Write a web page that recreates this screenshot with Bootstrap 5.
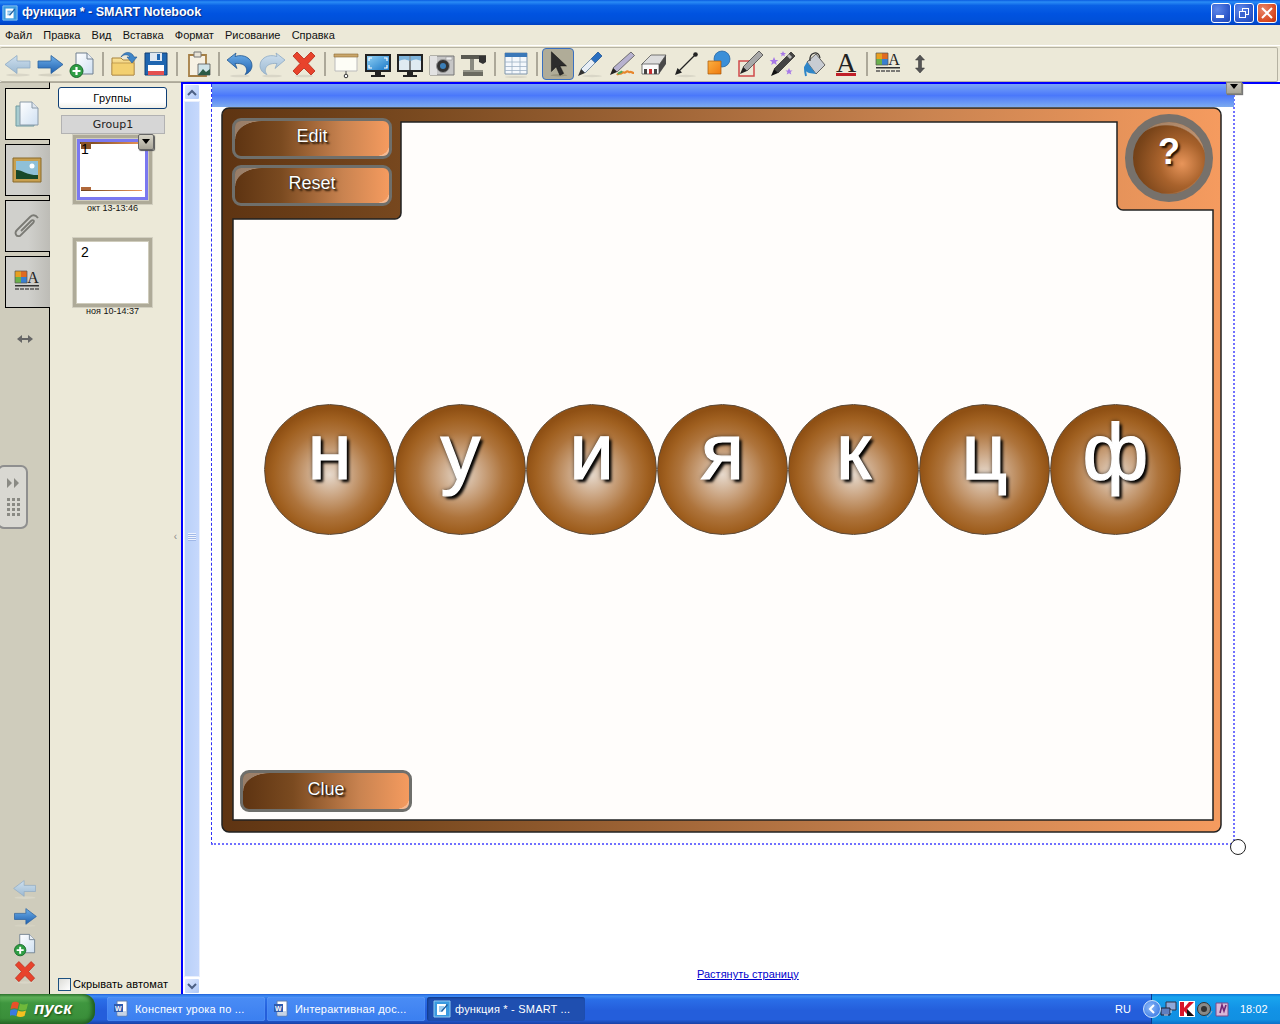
<!DOCTYPE html>
<html lang="ru">

<head>
    <meta charset="UTF-8">
    <title>функция * - SMART Notebook</title>
    <link href="https://cdn.jsdelivr.net/npm/bootstrap@5.3.3/dist/css/bootstrap.min.css" rel="stylesheet">
    <style>
        html, body { margin: 0; height: 100%; }
        body {
            width: 1280px; height: 1024px; overflow: hidden;
            background: #ece9d8; color: #000;
            font-family: "Liberation Sans", Arial, sans-serif; font-size: 11px;
        }
        .defs-holder { position: absolute; width: 0; height: 0; }

        /* title bar */
        .win-title {
            height: 25px; padding: 0 3px 0 2px; color: #fff;
            background: linear-gradient(#0a5be0 0, #2a8cf5 8%, #0a62e6 22%, #0053e0 55%, #0050d8 85%, #003fc0 100%);
        }
        .win-title-text { font-size: 12.5px; font-weight: 700; margin-left: 4px; text-shadow: 1px 1px 1px #0a2a80; }
        .win-ctl {
            width: 20px; height: 20px; margin-left: 3px; border: 1px solid #fff; border-radius: 3px;
            background: radial-gradient(circle at 30% 30%, #5f88ea, #2a55c8 70%, #2048b0);
        }
        .win-ctl-close { background: radial-gradient(circle at 30% 30%, #e8866a, #d8481f 70%, #b83010); }

        /* menu and toolbar */
        .win-menu { height: 20px; padding-left: 5px; font-size: 11px; color: #111; }
        .win-menu span { margin-right: 11.2px; }
        .tool-wrap { height: 37px; padding: 1px 2px 1px 0; border-top: 1px solid #fff; border-bottom: 1px solid #fff; }
        .tool-row {
            height: 35px; padding: 0 0 2px 2px; width: 100%;
            border: 1px solid #b5b2a2; border-left: 0; border-radius: 2px; background: #ece9d8;
        }
        .tool-btn { width: 32px; height: 32px; flex: none; display: block; }
        .tool-on { background: #b0ac98; border: 1px solid #3a70c0; border-radius: 4px; }
        .tool-sep { width: 10px; flex: none; display: flex; justify-content: center; }
        .tool-sep i { width: 2px; height: 24px; background: #aca899; display: block; }

        /* left side */
        .work-area { height: 912px; }
        .tab-strip { width: 50px; flex: none; background: #cfccbc; border-right: 1px solid #000; border-top: 1px solid #aca899; padding-top: 5px; position: relative; }
        .side-tab {
            width: 45px; height: 52px; margin: 0 0 4px 5px; padding-right: 2px; flex: none;
            border: 1px solid #000; border-right: 0;
            background: linear-gradient(90deg, #d0d0cc 50%, #bdbcb6 100%);
        }
        .side-tab-on { width: 45px; margin-right: -1px; background: #ece9d8; position: relative; z-index: 1; }
        .strip-swap { margin-top: 22px; }
        .strip-grip {
            position: absolute; left: -3px; top: 382px; width: 31px; height: 64px;
            background: #d9d8d2; border: 2px solid #8f8f8f; border-radius: 7px;
        }
        .side-panel { width: 131px; flex: none; border-top: 1px solid #aca899; position: relative; }
        .group-btn {
            width: 109px; height: 22px; margin: 4px 0 0 8px; padding: 0; font-size: 11px;
            letter-spacing: .3px; line-height: 19px; color: #000;
            background: linear-gradient(#fff, #fff 70%, #f0efe8); border: 1px solid #0f3f75; border-radius: 3px;
        }
        .group-name {
            width: 104px; height: 19px; margin: 6px 0 0 11px; line-height: 18px; text-align: center;
            background: #d6d6d6; border: 1px solid #b2b2b2;
            font-family: "DejaVu Sans", sans-serif; font-size: 11px; color: #222;
        }
        .thumb-box {
            width: 79px; margin-left: 23px; position: relative; padding: 3px;
            background: #fff; border: 3px solid #aeaa98;
            box-shadow: inset 0 0 0 1px #cfccbc, 0 0 0 1px #d2cfc0;
        }
        .thumb-a { height: 69px; margin-top: 1px; padding: 0; }
        .thumb-b { height: 69px; margin-top: 25px; font-size: 14px; line-height: 14px; padding: 4px 0 0 5px; }
        .thumb-a-in { height: 61px; margin: 1px 1px; border: 3px solid #7a78f0; background: #fff; position: relative; line-height: 14px; font-size: 14px; overflow: hidden; }
        .mini-top { position: absolute; left: 0; right: 0; top: 0; height: 2px; background: linear-gradient(90deg, #6b3f18, #f09a5e); }
        .mini-tab { position: absolute; left: 1px; top: 0; width: 10px; height: 7px; background: #8a5428; }
        .mini-low { position: absolute; left: 1px; right: 3px; bottom: 6px; height: 1px; background: linear-gradient(90deg, #6b3f18, #f09a5e); }
        .mini-clue { position: absolute; left: 1px; bottom: 7px; width: 10px; height: 3px; background: #b0683a; }
        .mini-num { position: relative; margin-left: 1px; }
        .thumb-menu {
            position: absolute; right: -5px; top: -4px; width: 16px; height: 16px; z-index: 2;
            background: linear-gradient(#d8d5c8, #a8a598); border: 1px solid #666; border-radius: 2px;
            box-shadow: 1px 1px 1px #555;
        }
        .thumb-menu::after, .band-menu::after {
            content: ""; position: absolute; left: 3px; top: 4px;
            border: 4px solid transparent; border-top: 5px solid #000; border-bottom: 0;
        }
        .thumb-date { font-size: 9px; text-align: center; width: 125px; line-height: 10px; margin-top: -1px; color: #111; }
        .hide-check { margin: auto 0 3px 8px; font-size: 11px; letter-spacing: .1px; line-height: 13px; }
        .hide-check i { width: 13px; height: 13px; border: 1px solid #1c5180; background: linear-gradient(135deg, #dcdcd7, #fff); display: block; margin-right: 2px; }
        .split-mark { position: absolute; right: 4px; top: 449px; font-size: 10px; color: #888; line-height: 10px; }

        /* scrollbar */
        .page-scroll { width: 19px; flex: none; border-left: 2px solid #00f; border-top: 2px solid #00f; padding: 0 0 0 1px; background: #fff; }
        .scroll-cap { height: 16px; width: 16px; background: linear-gradient(135deg, #e1eafe, #aec8f7); border: 1px solid #fff; border-radius: 2px; flex: none; display: flex; align-items: center; justify-content: center; }
        .scroll-track { flex: 1; width: 16px; margin: 1px 0; background: linear-gradient(90deg, #b9d0f8, #c6d8fc); border: 1px solid #e8eefc; position: relative; }
        .scroll-grip { position: absolute; left: 3px; right: 3px; top: 431px; height: 8px; background: repeating-linear-gradient(#eef3fe 0 1px, #a0b8e8 1px 2px); }

        /* notebook page, objects sit on a free canvas */
        .page-canvas { background: #fff; border-top: 2px solid #00f; position: relative; min-width: 0; }
        .game-box {
            position: absolute; left: 11px; top: 0; width: 1024px; height: 761px;
            border-left: 1px dashed #3030f5; border-right: 2px dotted #7070ff; border-bottom: 2px dotted #7070ff;
        }
        .game-band { height: 23px; margin-right: -1px; background: linear-gradient(#7aa6f5 0, #4a78fb 50%, #7dabef 100%); }
        .band-menu {
            position: absolute; left: 1014px; top: -2px; width: 16px; height: 12px;
            background: linear-gradient(#c8c5b8, #a8a598); border: 1px solid #8a8a80; box-shadow: 1px 1px 1px #777;
        }
        .band-menu::after { top: 1px; }
        .game-frame { width: 1001px; height: 726px; margin-left: 9px; position: relative; padding-top: 7px; }
        .game-bg { position: absolute; left: 0; top: 0; }
        .game-top, .ball-row, .clue-row { position: relative; }
        .tab-btns { margin: 4px 0 0 11px; }
        .gloss-btn {
            width: 160px; height: 41px; padding-bottom: 4px; display: flex; align-items: center; justify-content: center; position: relative; overflow: hidden;
            border: 3px solid #6f6f6b; border-radius: 9px; color: #fff; font-size: 18px;
            background: linear-gradient(90deg, #5e3412 0, #7a4a20 30%, #c98350 70%, #f59b5f 100%);
            text-shadow: 2px 2px 2px #1c0f00, 0 0 1px #000;
        }
        .gloss-btn + .gloss-btn { margin-top: 6px; }
        .gloss-btn::before {
            content: ""; position: absolute; left: 0; top: 0; width: 26px; height: 18px;
            background: radial-gradient(ellipse 26px 18px at 100% 100%, transparent 97%, rgba(255, 255, 255, .36) 100%);
        }
        .gloss-btn::after {
            content: ""; position: absolute; right: 0; bottom: 0; width: 13px; height: 10px;
            background: radial-gradient(ellipse 13px 10px at 0 0, transparent 97%, rgba(255, 255, 255, .32) 100%);
        }
        .help-btn {
            width: 88px; height: 88px; margin-right: 9px; padding-bottom: 12px; border-radius: 50%; border: 8px solid #77716b;
            background: radial-gradient(circle at 68% 58%, #e8955a 0, #a8622c 35%, #7a451a 70%, #5e3412 100%);
            color: #fff; font-size: 36px; font-weight: 700; display: flex; align-items: center; justify-content: center; position: relative; overflow: hidden;
            text-shadow: 2px 2px 2px #221100;
        }
        .help-btn::before {
            content: ""; position: absolute; inset: 0;
            background: radial-gradient(circle 42px at 46% 62%, transparent 97%, rgba(255, 255, 255, .34) 100%);
        }
        .help-btn::after {
            content: ""; position: absolute; inset: 0;
            background: radial-gradient(circle 42px at 46% 42%, transparent 97%, rgba(255, 255, 255, .14) 100%);
        }
        .ball-row { margin: 198px 0 0 43px; }
        .ball {
            width: 131px; height: 131px; flex: none; border-radius: 50%;
            border: 1.5px solid #5d4a38; color: #fff; font-size: 80px; line-height: 1;
            -webkit-text-stroke: 1.2px #fff;
            display: flex; align-items: center; justify-content: center; padding-bottom: 36px;
            background: radial-gradient(circle 66px at 50% 54%, #e6d9cc 0, #c9a27e 35%, #ae743c 65%, #a06020 85%, #8f5014 100%);
            text-shadow: 3px 3px 3px #000, 0 0 4px rgba(0, 0, 0, .8);
        }
        .clue-row { margin: 235px 0 0 19px; }
        .clue-btn { width: 172px; height: 42px; }

        .corner-handle { position: absolute; left: 1030px; top: 755px; width: 16px; height: 16px; border-radius: 50%; border: 1.5px solid #222; background: #fff; }
        .fit-link { position: absolute; left: 497px; top: 882px; font-size: 11px; color: #00c; text-decoration: underline; }

        /* taskbar */
        .task-bar {
            height: 30px; color: #fff;
            background: linear-gradient(#1f5fd8 0, #3f8cf3 7%, #2a6ee8 18%, #245edb 55%, #245edb 85%, #1941a5 100%);
        }
        .start-btn {
            width: 95px; height: 30px; flex: none; padding-left: 10px; font-size: 17px; font-weight: 700; font-style: italic;
            border-radius: 0 12px 12px 0; text-shadow: 1px 1px 2px #1a4a10;
            background: linear-gradient(#3c8a3c 0, #62b45c 10%, #3f963f 30%, #3a8f3a 80%, #2c6e2c 100%);
            box-shadow: inset -3px 0 4px #1f5c1f;
        }
        .task-item {
            width: 158px; height: 24px; margin-right: 2px; padding-left: 6px; flex: none; border-radius: 3px; font-size: 11px; letter-spacing: .2px;
            background: linear-gradient(#4a8cf5, #3b7ff0);
            box-shadow: inset 0 0 1px #9cc0fa;
        }
        .task-item-on { background: #1f4fb0; box-shadow: inset 1px 1px 2px #123a88; }
        .task-tray {
            width: 129px; height: 30px; flex: none; padding-left: 8px; position: relative; font-size: 11px;
            background: linear-gradient(#0c77d8 0, #19a5ee 10%, #1293e6 50%, #1190e2 85%, #0c6fc8 100%);
            border-left: 1px solid #0a3a90;
        }
        .tray-lang { font-size: 11px; margin-right: 20px; }
        .tray-open { position: absolute; left: -9px; top: 6px; width: 18px; height: 18px; border-radius: 50%; border: 1px solid #cfe2fb; background: radial-gradient(circle at 40% 40%, #8cb8f8, #2a6ee0); }
    </style>
</head>

<body class="d-flex flex-column">
    <svg class="defs-holder" aria-hidden="true">
        <defs>
            <linearGradient id="blueA" x1="0" y1="0" x2="0" y2="1"><stop offset="0" stop-color="#6fb0ea"/><stop offset="1" stop-color="#1d5faf"/></linearGradient>
            <linearGradient id="paleA" x1="0" y1="0" x2="0" y2="1"><stop offset="0" stop-color="#cfe0ee"/><stop offset="1" stop-color="#9cb9d2"/></linearGradient>
            <linearGradient id="docA" x1="0" y1="0" x2="1" y2="1"><stop offset="0" stop-color="#fff"/><stop offset="1" stop-color="#cfe0f2"/></linearGradient>
            <linearGradient id="folderA" x1="0" y1="0" x2="0" y2="1"><stop offset="0" stop-color="#fbe49a"/><stop offset="1" stop-color="#dcae4c"/></linearGradient>
            <linearGradient id="screenA" x1="0" y1="0" x2="1" y2="1"><stop offset="0" stop-color="#8fd0f4"/><stop offset="1" stop-color="#1a78c8"/></linearGradient>
            <linearGradient id="orangeA" x1="0" y1="0" x2="1" y2="1"><stop offset="0" stop-color="#fbb040"/><stop offset="1" stop-color="#ee7a10"/></linearGradient>
            <linearGradient id="frameA" x1="0" y1="0" x2="1" y2="0"><stop offset="0" stop-color="#5e3412"/><stop offset=".2" stop-color="#7a4a20"/><stop offset=".7" stop-color="#c98350"/><stop offset="1" stop-color="#f59b5f"/></linearGradient>
        </defs>
        <symbol id="i-fwd" viewBox="0 0 32 32"><ellipse cx="16" cy="27" rx="12" ry="1.5" fill="#d5d2c2"/><path d="M4 13h13V7.500l12 9-12 9V20H4z" fill="url(#blueA)" stroke="#2a5f9c" stroke-width=".8"/></symbol>
        <symbol id="i-back" viewBox="0 0 32 32"><ellipse cx="16" cy="27" rx="12" ry="1.500" fill="#d9d6c7"/><path d="M28 13H15V7.500l-12 9 12 9V20h13z" fill="url(#paleA)" stroke="#8fabc4" stroke-width=".8"/></symbol>
        <symbol id="i-new" viewBox="0 0 32 32"><path d="M10 5h11l6 6v15H10z" fill="url(#docA)" stroke="#6f7f8f"/><path d="M21 5v6h6" fill="#e8eef5" stroke="#6f7f8f"/><circle cx="10.500" cy="23" r="6.500" fill="#2f9e44" stroke="#1a6a2c"/><path d="M10.500 19v8M6.500 23h8" stroke="#fff" stroke-width="2.200"/></symbol>
        <symbol id="i-open" viewBox="0 0 32 32"><path d="M4 10h9l2 2h11v15H4z" fill="url(#folderA)" stroke="#a8823a"/><path d="M4 15h22v12H4z" fill="#f3d070" stroke="#a8823a" stroke-width=".6"/><path d="M13 9c3-6 11-6 13 0h3l-5 6-5-6h3c-2-3-6-3-9 0z" fill="#3f86c8" stroke="#22568e" stroke-width=".6"/></symbol>
        <symbol id="i-save" viewBox="0 0 32 32"><path d="M5 5h22v22H5z" fill="#1f66b0" stroke="#123f72"/><path d="M10 5h12v8H10z" fill="#dfe8f2"/><path d="M17 6h3v6h-3z" fill="#1f66b0"/><path d="M8 17h16v10H8z" fill="#fff"/><path d="M8 23h16v4H8z" fill="#e45050"/></symbol>
        <symbol id="i-paste" viewBox="0 0 32 32"><path d="M7 7h17v21H7z" fill="#f7f1e3" stroke="#a57f45" stroke-width="1.800"/><path d="M12 4h7v5h-7z" fill="#e8e3d6" stroke="#777"/><path d="M16 16h12v11H16z" fill="#cfe3e8" stroke="#555" stroke-width=".8"/><path d="M16 27l5-6 3 3 4-3v6z" fill="#2a5a46"/></symbol>
        <symbol id="i-undo" viewBox="0 0 32 32"><ellipse cx="16" cy="28" rx="10" ry="1.300" fill="#d9d6c7"/><path d="M11 8.500c9-3 17 2 17 9 0 4-3 8-7 9 3-3 3-12-10-11l2 5L3 12l9-7z" fill="url(#blueA)" stroke="#25588f" stroke-width=".8"/></symbol>
        <symbol id="i-redo" viewBox="0 0 32 32"><ellipse cx="16" cy="28" rx="10" ry="1.300" fill="#d9d6c7"/><path d="M21 8.500c-9-3-17 2-17 9 0 4 3 8 7 9-3-3-3-12 10-11l-2 5 10-8.500-9-7z" fill="url(#paleA)" stroke="#8fabc4" stroke-width=".8"/></symbol>
        <symbol id="i-del" viewBox="0 0 32 32"><ellipse cx="16" cy="28" rx="9" ry="1.300" fill="#d9d6c7"/><path d="M9 4l7 7 7-7 4 4-7 7.500 7 7.500-4 4-7-7-7 7-4-4 7-7.500L5 8z" fill="#e8432c" stroke="#b52a18" stroke-width=".8"/></symbol>
        <symbol id="i-shade" viewBox="0 0 32 32"><path d="M5 8h22v15H5z" fill="#fdfdf6" stroke="#bbb"/><path d="M4 6h24v3H4z" fill="#c9a66a" stroke="#8a6a34" stroke-width=".6"/><path d="M16 23v3" stroke="#555"/><circle cx="16" cy="28" r="1.800" fill="#fff" stroke="#333"/></symbol>
        <symbol id="i-full" viewBox="0 0 32 32"><path d="M3 6h26v18H3z" fill="#222"/><path d="M5 8h22v14H5z" fill="url(#screenA)"/><path d="M7 13v-3h3M25 13v-3h-3M7 17v3h3M25 17v3h-3" stroke="#fff" fill="none" stroke-width="1.200"/><path d="M13 24h6v3h4v2H9v-2h4z" fill="#222"/></symbol>
        <symbol id="i-dual" viewBox="0 0 32 32"><path d="M3 6h26v18H3z" fill="#222"/><path d="M5 8h10.500v14H5zM16.500 8H27v14H16.500z" fill="#dfeaf2"/><path d="M5 8h10.500v5c-4-2-7-2-10.500 0zM16.500 8H27v5c-4-2-7-2-10.500 0z" fill="#7fb5dc"/><path d="M13 24h6v3h4v2H9v-2h4z" fill="#222"/></symbol>
        <symbol id="i-cam" viewBox="0 0 32 32"><path d="M4 8h24v19H4z" fill="#c6c6c6" stroke="#777"/><path d="M4 8h7v19H4z" fill="#e2e2e2"/><circle cx="17" cy="18" r="6.500" fill="#333" stroke="#999"/><circle cx="17" cy="18" r="3" fill="#3b7fb8"/><path d="M20 9h6v3h-6z" fill="#eee" stroke="#888" stroke-width=".5"/></symbol>
        <symbol id="i-doccam" viewBox="0 0 32 32"><path d="M3 7h25v4H3z" fill="#5a5a52"/><path d="M21 8h7v6l-3 2-4-2z" fill="#333"/><path d="M12 11h4v12h-4z" fill="#8a8a80"/><path d="M5 22h20v6H5z" fill="#6b6b62"/><path d="M5 22h20v2H5z" fill="#97978c"/></symbol>
        <symbol id="i-table" viewBox="0 0 32 32"><ellipse cx="16" cy="29" rx="11" ry="1" fill="#d9d6c7"/><path d="M5 5h22v21H5z" fill="#f4f8fc" stroke="#7f95ab"/><path d="M5 5h22v4H5z" fill="#3a78b8"/><path d="M5 14h22M5 18.500h22M5 22.500h22M12 9v17M20 9v17" stroke="#9db0c4" stroke-width=".8"/></symbol>
        <symbol id="i-sel" viewBox="0 0 32 32"><ellipse cx="17" cy="28" rx="9" ry="1.300" fill="#99957f"/><path d="M9 3l0 21 5-5 4 9 4-2-4-8h7z" fill="#2c2c2c" stroke="#111" stroke-width=".6"/></symbol>
        <symbol id="i-pen" viewBox="0 0 32 32"><ellipse cx="18" cy="28" rx="10" ry="1.200" fill="#d9d6c7"/><path d="M24 4l4 4L11 25l-4-4z" fill="#2a6fc0" stroke="#144a8c" stroke-width=".7"/><path d="M17 11l4 4-10 10-4-4z" fill="#e8eef5" stroke="#6d7f90" stroke-width=".6"/><path d="M7 21l4 4-7 3z" fill="#333"/></symbol>
        <symbol id="i-cpen" viewBox="0 0 32 32"><path d="M25 4l3.500 3.500L11 24l-4-4z" fill="#b7b2cf" stroke="#444" stroke-width=".7"/><path d="M7 20l4 4-7 3z" fill="#222"/><path d="M11 27c2-3 3 0 5-2s2 1 4-1 3 1 4 0 2 1 4 1" fill="none" stroke="#e8862c" stroke-width="2.200"/><path d="M12 26c2-2 3-1 4-3" fill="none" stroke="#4fa85a" stroke-width="2"/></symbol>
        <symbol id="i-eraser" viewBox="0 0 32 32"><path d="M4 16L13 7h15l-7 10H4z" fill="#ddd" stroke="#444" stroke-width=".7"/><path d="M28 7v9l-7 10v-9z" fill="#4a4a4a"/><path d="M4 16h17v10H4z" fill="#fafafa" stroke="#444" stroke-width=".7"/><path d="M6 21h3v5H6z" fill="#444"/><path d="M11 21h3v5h-3z" fill="#c43030"/><path d="M16 21h3v5h-3z" fill="#444"/></symbol>
        <symbol id="i-line" viewBox="0 0 32 32"><ellipse cx="16" cy="28" rx="10" ry="1.200" fill="#d9d6c7"/><path d="M8 24L25 7" stroke="#222" stroke-width="1.300"/><circle cx="25.500" cy="6.500" r="2.300" fill="#222"/><path d="M5 27l2.500-7 4.500 4.500z" fill="#222"/></symbol>
        <symbol id="i-shapes" viewBox="0 0 32 32"><circle cx="20" cy="11" r="8" fill="#3a8fd8" stroke="#1f5f9c" stroke-width=".7"/><path d="M6 13h13v13H6z" fill="url(#orangeA)" stroke="#a85808" stroke-width=".7"/></symbol>
        <symbol id="i-spen" viewBox="0 0 32 32"><path d="M5 13h15v15H5z" fill="none" stroke="#d04a4a" stroke-width="1.500"/><path d="M25 3l4 4-16 16-4-4z" fill="#a8a8a8" stroke="#333" stroke-width=".7"/><path d="M9 19l4 4-7 3z" fill="#222"/></symbol>
        <symbol id="i-magic" viewBox="0 0 32 32"><path d="M25 4l4 4L12 25l-4-4z" fill="#444" stroke="#111" stroke-width=".6"/><path d="M23 6l3 3-2 2-3-3z" fill="#bbb"/><path d="M8 21l4 4-7 3z" fill="#111"/><path d="M8 9l1.300 3h3l-2.400 2 .9 3-2.800-1.700L5.200 17l.9-3-2.400-2h3z" fill="#a87ae8"/><path d="M17 3l.9 2h2.100l-1.700 1.400.6 2.100-1.900-1.200-1.900 1.200.6-2.100L14 5h2.100z" fill="#a87ae8"/><path d="M23 20l1.100 2.500h2.500l-2 1.600.7 2.500-2.300-1.400-2.300 1.400.7-2.500-2-1.600h2.500z" fill="#a87ae8"/></symbol>
        <symbol id="i-fill" viewBox="0 0 32 32"><path d="M9 14l9-8 9 11-9 9z" fill="#c8ccd2" stroke="#444" stroke-width=".8"/><path d="M12 13c-1-9 9-11 10-3" fill="none" stroke="#333" stroke-width="1.200"/><path d="M9 14l9 12-7-1c-3-1-5-3-5-6z" fill="#2f86c8"/><path d="M7 19c0 3 0 6 1 9" stroke="#2f86c8" stroke-width="2" fill="none"/></symbol>
        <symbol id="i-move" viewBox="0 0 32 32"><path d="M16 7l4.500 5h-3v8h3L16 25l-4.500-5h3v-8h-3z" fill="#555" stroke="#333" stroke-width=".5"/></symbol>
        <symbol id="i-pages" viewBox="0 0 32 32"><path d="M5 8h14l4 4v16H5z" fill="#a8ccd0" stroke="#6f9aa0"/><path d="M9 4h12l6 6v17H9z" fill="url(#docA)" stroke="#8a9aa8"/><path d="M21 4v6h6" fill="#dfe6ee" stroke="#8a9aa8"/></symbol>
        <symbol id="i-gallery" viewBox="0 0 32 32"><path d="M2 4h28v24H2z" fill="#c8a050" stroke="#8a6a2a"/><path d="M5 7h22v18H5z" fill="#8fc0d8"/><path d="M5 25v-9c5-1 9 5 22 5v4z" fill="#17482a"/><circle cx="21" cy="12" r="2.500" fill="#fff"/></symbol>
        <symbol id="i-clip" viewBox="0 0 32 32"><path d="M27 8c-3-4-6-3-8-1L6 20c-3 3-1 7 3 6l13-13c2-2 0-4-2-2L10 21" fill="none" stroke="#7a7a74" stroke-width="1.800"/></symbol>
        <symbol id="i-note" viewBox="0 0 18 18"><path d="M1 1h16v16H1z" fill="#3a9ae0" stroke="#8fc8f0"/><path d="M4 4h9v11H4z" fill="#fff"/><path d="M6 7h5M6 9h5M6 11h3" stroke="#3a9ae0"/><path d="M8 11l6-7 1 1-6 7z" fill="#2060a0"/></symbol>
    </svg>

    <!-- заголовок окна -->
    <div class="win-title d-flex align-items-center flex-none">
        <svg width="16" height="18"><use href="#i-note"/></svg>
        <span class="win-title-text">функция * - SMART Notebook</span>
        <div class="win-ctl ms-auto d-flex align-items-end justify-content-center pb-1">
            <svg width="10" height="4"><rect y="1" width="8" height="3" fill="#fff"/></svg>
        </div>
        <div class="win-ctl d-flex align-items-center justify-content-center">
            <svg width="12" height="12" fill="none" stroke="#fff"><rect x="4.500" y="1.500" width="6" height="6"/><rect x="1.500" y="4.500" width="6" height="6" fill="#3a64d0"/></svg>
        </div>
        <div class="win-ctl win-ctl-close d-flex align-items-center justify-content-center">
            <svg width="12" height="12" stroke="#fff" stroke-width="2"><path d="M1 1l10 10M11 1L1 11"/></svg>
        </div>
    </div>

    <div class="win-menu d-flex align-items-center">
        <span>Файл</span><span>Правка</span><span>Вид</span><span>Вставка</span><span>Формат</span><span>Рисование</span><span>Справка</span>
    </div>

    <div class="tool-wrap d-flex">
        <div class="tool-row d-flex align-items-center">
            <svg class="tool-btn"><use href="#i-back"/></svg>
            <svg class="tool-btn"><use href="#i-fwd"/></svg>
            <svg class="tool-btn"><use href="#i-new"/></svg>
            <div class="tool-sep"><i></i></div>
            <svg class="tool-btn"><use href="#i-open"/></svg>
            <svg class="tool-btn"><use href="#i-save"/></svg>
            <div class="tool-sep"><i></i></div>
            <svg class="tool-btn"><use href="#i-paste"/></svg>
            <div class="tool-sep"><i></i></div>
            <svg class="tool-btn"><use href="#i-undo"/></svg>
            <svg class="tool-btn"><use href="#i-redo"/></svg>
            <svg class="tool-btn"><use href="#i-del"/></svg>
            <div class="tool-sep"><i></i></div>
            <svg class="tool-btn"><use href="#i-shade"/></svg>
            <svg class="tool-btn"><use href="#i-full"/></svg>
            <svg class="tool-btn"><use href="#i-dual"/></svg>
            <svg class="tool-btn"><use href="#i-cam"/></svg>
            <svg class="tool-btn"><use href="#i-doccam"/></svg>
            <div class="tool-sep"><i></i></div>
            <svg class="tool-btn"><use href="#i-table"/></svg>
            <div class="tool-sep"><i></i></div>
            <svg class="tool-btn tool-on"><use href="#i-sel"/></svg>
            <svg class="tool-btn"><use href="#i-pen"/></svg>
            <svg class="tool-btn"><use href="#i-cpen"/></svg>
            <svg class="tool-btn"><use href="#i-eraser"/></svg>
            <svg class="tool-btn"><use href="#i-line"/></svg>
            <svg class="tool-btn"><use href="#i-shapes"/></svg>
            <svg class="tool-btn"><use href="#i-spen"/></svg>
            <svg class="tool-btn"><use href="#i-magic"/></svg>
            <svg class="tool-btn"><use href="#i-fill"/></svg>
            <svg class="tool-btn" viewBox="0 0 32 32"><text x="16" y="24" text-anchor="middle" font-family="Liberation Serif, serif" font-size="28" fill="#222">A</text><path d="M6 25h20v3H6z" fill="#c0202a"/></svg>
            <div class="tool-sep"><i></i></div>
            <svg class="tool-btn" viewBox="0 0 32 32"><path d="M4 5h6v6H4z" fill="#e8a020"/><path d="M10 5h6v6h-6z" fill="#e06a20"/><path d="M4 11h6v6H4z" fill="#6ab04c"/><path d="M10 11h6v6h-6z" fill="#3a7fd0"/><path d="M4 5h12v12H4z" fill="none" stroke="#555" stroke-width=".7"/><text x="22" y="17" text-anchor="middle" font-family="Liberation Serif, serif" font-size="16" fill="#222">A</text><path d="M4 19h24v1.500H4z" fill="#333"/><path d="M4 23h24" stroke="#555" stroke-dasharray="4 1" stroke-width="1.500"/></svg>
            <svg class="tool-btn"><use href="#i-move"/></svg>
        </div>
    </div>

    <div class="work-area d-flex">
        <div class="tab-strip d-flex flex-column">
            <div class="side-tab side-tab-on d-flex align-items-center justify-content-center"><svg width="32" height="32"><use href="#i-pages"/></svg></div>
            <div class="side-tab d-flex align-items-center justify-content-center"><svg width="32" height="32"><use href="#i-gallery"/></svg></div>
            <div class="side-tab d-flex align-items-center justify-content-center"><svg width="32" height="32"><use href="#i-clip"/></svg></div>
            <div class="side-tab d-flex align-items-center justify-content-center">
                <svg width="32" height="32" viewBox="0 0 32 32"><path d="M4 5h6v6H4z" fill="#e8a020"/><path d="M10 5h6v6h-6z" fill="#e06a20"/><path d="M4 11h6v6H4z" fill="#6ab04c"/><path d="M10 11h6v6h-6z" fill="#3a7fd0"/><path d="M4 5h12v12H4z" fill="none" stroke="#555" stroke-width=".7"/><text x="22" y="17" text-anchor="middle" font-family="Liberation Serif, serif" font-size="16" fill="#222">A</text><path d="M4 19h24v1.500H4z" fill="#333"/><path d="M4 23h24" stroke="#555" stroke-dasharray="4 1" stroke-width="1.500"/></svg>
            </div>
            <svg class="align-self-center strip-swap" width="16" height="10" fill="#666"><path d="M0 5l5-4v3h6V1l5 4-5 4V6H5v3z"/></svg>
            <div class="strip-grip d-flex flex-column align-items-center justify-content-center gap-2">
                <svg width="16" height="12" fill="#8a8a84"><path d="M2 1v10l5-5zM9 1v10l5-5z"/></svg>
                <svg width="16" height="20" fill="#8a8a84"><path d="M2 1h3v3H2zM7 1h3v3H7zM12 1h3v3h-3zM2 6h3v3H2zM7 6h3v3H7zM12 6h3v3h-3zM2 11h3v3H2zM7 11h3v3H7zM12 11h3v3h-3zM2 16h3v3H2zM7 16h3v3H7zM12 16h3v3h-3z"/></svg>
            </div>
            <div class="mt-auto d-flex flex-column align-items-center">
                <svg width="28" height="28"><use href="#i-back"/></svg>
                <svg width="28" height="28"><use href="#i-fwd"/></svg>
                <svg width="28" height="28"><use href="#i-new"/></svg>
                <svg width="28" height="28"><use href="#i-del"/></svg>
                <div class="pb-1 pt-1"></div>
            </div>
        </div>

        <div class="side-panel d-flex flex-column">
            <button class="group-btn btn" type="button">Группы</button>
            <div class="group-name">Group1</div>
            <div class="thumb-box thumb-a">
                <div class="thumb-menu"></div>
                <div class="thumb-a-in">
                    <div class="mini-top"></div>
                    <div class="mini-tab"></div>
                    <div class="mini-low"></div>
                    <div class="mini-clue"></div>
                    <span class="mini-num">1</span>
                </div>
            </div>
            <div class="thumb-date">окт 13-13:46</div>
            <div class="thumb-box thumb-b">2</div>
            <div class="thumb-date">ноя 10-14:37</div>
            <span class="split-mark">‹</span>
            <div class="hide-check d-flex align-items-center"><i></i>Скрывать автомат</div>
        </div>

        <div class="page-scroll d-flex flex-column">
            <div class="scroll-cap"><svg width="10" height="7" fill="none" stroke="#4d6185" stroke-width="2"><path d="M1 6l4-4 4 4"/></svg></div>
            <div class="scroll-track"><div class="scroll-grip"></div></div>
            <div class="scroll-cap"><svg width="10" height="7" fill="none" stroke="#4d6185" stroke-width="2"><path d="M1 1l4 4 4-4"/></svg></div>
        </div>

        <div class="page-canvas flex-grow-1">
            <div class="game-box">
                <div class="game-band"></div>
                <div class="band-menu"></div>
                <div class="game-frame">
                    <svg class="game-bg" width="1001" height="726">
                        <path fill="url(#frameA)" stroke="#222" stroke-width="1.500" d="M8 1h985a7 7 0 0 1 7 7v710a7 7 0 0 1-7 7H8a7 7 0 0 1-7-7V8a7 7 0 0 1 7-7z"/>
                        <path fill="#fffdfb" stroke="#222" stroke-width="1.500" d="M896 15v82a6 6 0 0 0 6 6h90v610H12V112h162a6 6 0 0 0 6-6V15z"/>
                    </svg>
                    <div class="game-top d-flex justify-content-between align-items-start">
                        <div class="tab-btns">
                            <div class="gloss-btn">Edit</div>
                            <div class="gloss-btn">Reset</div>
                        </div>
                        <div class="help-btn">?</div>
                    </div>
                    <div class="ball-row d-flex">
                        <div class="ball">н</div>
                        <div class="ball">у</div>
                        <div class="ball">и</div>
                        <div class="ball">я</div>
                        <div class="ball">к</div>
                        <div class="ball">ц</div>
                        <div class="ball">ф</div>
                    </div>
                    <div class="clue-row">
                        <div class="gloss-btn clue-btn">Clue</div>
                    </div>
                </div>
            </div>
            <div class="corner-handle"></div>
            <a class="fit-link" href="#">Растянуть страницу</a>
        </div>
    </div>

    <div class="task-bar d-flex align-items-center">
        <div class="start-btn d-flex align-items-center gap-1 me-2">
            <svg width="20" height="20" viewBox="0 0 20 20"><path d="M2 4c3-2 5-1 7 0l-1.500 6c-2-1-4-1-7 0z" fill="#e8502a"/><path d="M10 4.500c2 1 4 1.500 8 0l-1.500 6c-3 1.500-6 1-8 0z" fill="#6fb83a"/><path d="M.5 11c3-1 5-1 7 0L6 17c-2-1-4-1-7 0z" fill="#3a7ae0"/><path d="M8 11.500c2 1 5 1.500 8 0L14.500 17c-3 1.500-6 1-8 0z" fill="#f5c020"/></svg>
            <span>пуск</span>
        </div>
        <div class="task-item d-flex align-items-center gap-1 ms-1">
            <svg width="18" height="18" viewBox="0 0 18 18"><path d="M4 1h10v15H4z" fill="#fff" stroke="#5f7fb0"/><path d="M5 14h8M5 12h8" stroke="#8fa8cc"/><path d="M1 4h9v8H1z" fill="#2f5cb0"/><text x="5.500" y="10.500" text-anchor="middle" font-family="Liberation Sans, sans-serif" font-weight="700" font-size="7" fill="#fff">W</text></svg>
            <span>Конспект урока по ...</span>
        </div>
        <div class="task-item d-flex align-items-center gap-1">
            <svg width="18" height="18" viewBox="0 0 18 18"><path d="M4 1h10v15H4z" fill="#fff" stroke="#5f7fb0"/><path d="M5 14h8M5 12h8" stroke="#8fa8cc"/><path d="M1 4h9v8H1z" fill="#2f5cb0"/><text x="5.500" y="10.500" text-anchor="middle" font-family="Liberation Sans, sans-serif" font-weight="700" font-size="7" fill="#fff">W</text></svg>
            <span>Интерактивная дос...</span>
        </div>
        <div class="task-item task-item-on d-flex align-items-center gap-1"><svg width="18" height="18"><use href="#i-note"/></svg><span>функция * - SMART ...</span></div>
        <span class="tray-lang ms-auto">RU</span>
        <div class="task-tray d-flex align-items-center">
            <div class="tray-open d-flex align-items-center justify-content-center"><svg width="8" height="10" fill="none" stroke="#fff" stroke-width="2"><path d="M6 1L2 5l4 4"/></svg></div>
            <svg width="18" height="18" viewBox="0 0 18 18"><path d="M6 2h10v8H6z" fill="#8fa8d8" stroke="#334"/><path d="M1 8h9v7H1z" fill="#5f7fc0" stroke="#223"/><path d="M4 15h4M11 10v3" stroke="#dde"/></svg>
            <svg width="18" height="18" viewBox="0 0 18 18"><path d="M1 1h16v16H1z" fill="#fff"/><path d="M2 2h4v6l5-6h5l-7 7 7 7h-5L6 11v5H2z" fill="#d8142a"/><path d="M9 9l7 7H9z" fill="#111"/></svg>
            <svg width="18" height="18" viewBox="0 0 18 18"><circle cx="8" cy="9" r="6.500" fill="#8a8a88" stroke="#333"/><circle cx="8" cy="9" r="3" fill="#333"/><path d="M11 17c2-1 4-3 5-6" stroke="#9ab" fill="none"/></svg>
            <svg width="18" height="18" viewBox="0 0 18 18"><path d="M2 3h12v13H2z" fill="#d9b8d8" stroke="#7a4a8a"/><path d="M6 13l2-8 2 6 2-6" stroke="#702878" fill="none" stroke-width="1.600"/></svg>
            <span class="ms-2">18:02</span>
        </div>
    </div>
</body>

</html>
